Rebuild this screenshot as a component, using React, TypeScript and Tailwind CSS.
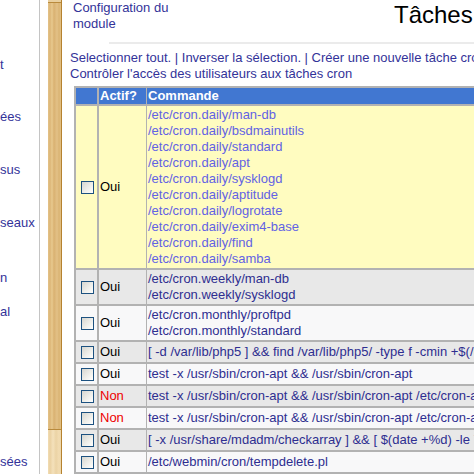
import React from "react";

type Row = {
  bg: string;
  active: boolean;
  color: string;
  cmds: string[];
};

const rows: Row[] = [
  {
    bg: "bg-[#fffcc0]",
    active: true,
    color: "text-[#6262e4]",
    cmds: [
      "/etc/cron.daily/man-db",
      "/etc/cron.daily/bsdmainutils",
      "/etc/cron.daily/standard",
      "/etc/cron.daily/apt",
      "/etc/cron.daily/sysklogd",
      "/etc/cron.daily/aptitude",
      "/etc/cron.daily/logrotate",
      "/etc/cron.daily/exim4-base",
      "/etc/cron.daily/find",
      "/etc/cron.daily/samba",
    ],
  },
  {
    bg: "bg-[#e8e8e8]",
    active: true,
    color: "text-[#2e2e90]",
    cmds: ["/etc/cron.weekly/man-db", "/etc/cron.weekly/sysklogd"],
  },
  {
    bg: "bg-[#f8f8f9]",
    active: true,
    color: "text-[#2e2e90]",
    cmds: ["/etc/cron.monthly/proftpd", "/etc/cron.monthly/standard"],
  },
  {
    bg: "bg-[#e8e8e8]",
    active: true,
    color: "text-[#2e2e90]",
    cmds: [
      "[ -d /var/lib/php5 ] && find /var/lib/php5/ -type f -cmin +$(/usr/lib/php5/maxlifetime) -print0 | xargs -r -0 rm",
    ],
  },
  {
    bg: "bg-[#f8f8f9]",
    active: true,
    color: "text-[#2e2e90]",
    cmds: ["test -x /usr/sbin/cron-apt && /usr/sbin/cron-apt"],
  },
  {
    bg: "bg-[#e8e8e8]",
    active: false,
    color: "text-[#2e2e90]",
    cmds: ["test -x /usr/sbin/cron-apt && /usr/sbin/cron-apt /etc/cron-apt/config2"],
  },
  {
    bg: "bg-[#f8f8f9]",
    active: false,
    color: "text-[#2e2e90]",
    cmds: ["test -x /usr/sbin/cron-apt && /usr/sbin/cron-apt /etc/cron-apt/config2"],
  },
  {
    bg: "bg-[#e8e8e8]",
    active: true,
    color: "text-[#2e2e90]",
    cmds: [
      "[ -x /usr/share/mdadm/checkarray ] && [ $(date +%d) -le 7 ] && /usr/share/mdadm/checkarray --cron --all --quiet",
    ],
  },
  {
    bg: "bg-[#f8f8f9]",
    active: true,
    color: "text-[#2e2e90]",
    cmds: ["/etc/webmin/cron/tempdelete.pl"],
  },
];

function Checkbox() {
  return (
    <span className="block w-[13px] h-[13px] border border-[#1c5180] bg-[linear-gradient(135deg,#d6d6d0_0%,#f0f0ec_60%,#ffffff_100%)]" />
  );
}

export default function App() {
  return (
    <div
      className="w-[474px] h-[474px] overflow-hidden bg-white flex text-[13px] leading-[16px]"
      style={{ fontFamily: '"Liberation Sans", Arial, sans-serif' }}
    >
      {/* left frame (clipped) */}
      <div className="w-[40px] shrink-0 h-full border-r border-[#c4c4c4] text-[#333399] flex flex-col">
        <div className="mt-[57px]">t</div>
        <div className="mt-[36px]">ées</div>
        <div className="mt-[37px]">sus</div>
        <div className="mt-[37px]">seaux</div>
        <div className="mt-[39px]">n</div>
        <div className="mt-[18px]">al</div>
        <div className="mt-[134px]">sées</div>
      </div>

      {/* spacer */}
      <div className="w-[8px] shrink-0" />

      {/* wood bar */}
      <div className="w-[14px] shrink-0 h-full flex flex-col border-r border-[#b5822f]">
        <div className="h-[2px] bg-[#e9cf9e]" />
        <div className="h-px bg-[#b98a3c]" />
        <div className="h-[426px] bg-[repeating-linear-gradient(90deg,#e4c389_0px,#dcb677_2px,#e8c98f_4px,#d9b171_6px,#e3c187_9px,#dab474_11px,#e2c084_13px)]" />
        <div className="h-px bg-[#b98a3c]" />
        <div className="flex-1 bg-[repeating-linear-gradient(90deg,#f2ddb4_0px,#ead1a2_2px,#f4e1bb_5px,#ebd3a5_8px,#f2dcb2_11px,#ecd5a8_13px)]" />
      </div>

      {/* content */}
      <div className="w-[720px] shrink-0 pl-[8px] flex flex-col">
        <div className="h-[42px] flex items-start">
          <div className="ml-[3px] w-[100px] text-[#333399]">Configuration du module</div>
          <div className="ml-[221px] pt-px text-[24px] leading-[28px] text-black whitespace-nowrap">
            Tâches Cron
          </div>
        </div>
        <div className="ml-[39px] h-[2px] bg-[#ebebeb]" />
        <div className="mt-[6px] text-[#333399] whitespace-nowrap">
          Selectionner tout. | Inverser la sélection. | Créer une nouvelle tâche cron.
        </div>
        <div className="text-[#333399] whitespace-nowrap">
          Contrôler l'accès des utilisateurs aux tâches cron
        </div>

        <div className="mt-[4px] ml-[4px] w-[640px] grid grid-cols-[21px_47px_1fr] gap-x-[1.5px] gap-y-[2px] p-[2px] pr-0 bg-[#b2b2b2]">
          <div className="bg-[#4177d1] h-[16px]" />
          <div className="bg-[#4177d1] h-[16px] pl-[1.5px] text-white font-bold">Actif?</div>
          <div className="bg-[#4177d1] h-[16px] pl-px text-white font-bold">Commande</div>

          {rows.map((r, i) => (
            <React.Fragment key={i}>
              <div className={`${r.bg} min-h-[20px] flex items-center justify-center pl-px`}>
                <Checkbox />
              </div>
              <div className={`${r.bg} flex items-center pl-[1.5px] ${r.active ? "text-black" : "text-[#ee0000]"}`}>
                {r.active ? "Oui" : "Non"}
              </div>
              <div className={`${r.bg} ${r.color} py-px pl-px flex flex-col justify-center whitespace-nowrap`}>
                {r.cmds.map((c, j) => (
                  <div key={j}>{c}</div>
                ))}
              </div>
            </React.Fragment>
          ))}
        </div>
      </div>
    </div>
  );
}
